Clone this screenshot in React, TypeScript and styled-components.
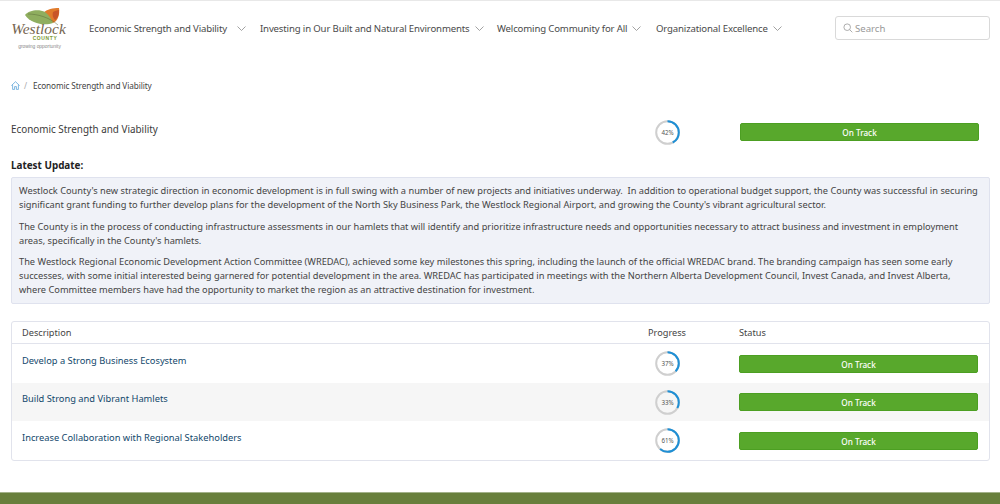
import React from "react";
import styled, { createGlobalStyle } from "styled-components";

const Global = createGlobalStyle`
  html, body { margin: 0; padding: 0; background: #fff; }
  body { font-family: "Noto Sans", "Open Sans", sans-serif; color: #333; overflow: hidden; }
`;
const Page = styled.div`
  width: 1000px; height: 504px; display: flex; flex-direction: column; overflow: hidden;
  border-top: 1px solid #e8e8e8; box-sizing: border-box;
`;
const Header = styled.header`
  height: 55px; display: flex; align-items: center; padding: 0 10px 0 11px; flex: none;
`;
const Logo = styled.div`
  width: 55px; height: 42px; margin-right: 23px; flex: none;
  display: flex; flex-direction: column; align-items: center; margin-top: 2px;
`;
const LeafSvg = styled.svg` width: 36px; height: 18px; margin-left: 8px; flex: none; margin-top: -1px; `;
const LogoName = styled.span`
  font: italic 15.5px/13px "Liberation Serif", serif; color: #75654f; margin-top: -4px;
`;
const LogoCounty = styled.span`
  font: bold 5px/6px "Liberation Sans", sans-serif; color: #7c9a2d; letter-spacing: .6px; margin-left: 13px;
`;
const LogoTag = styled.span`
  font: 4.9px/6px "Liberation Sans", sans-serif; color: #888; margin-top: 3px; white-space: nowrap; margin-left: 2px;
`;
const Nav = styled.nav` display: flex; align-items: center; flex: 1; margin-top: -1px; `;
const NavItem = styled.div<{ $w: number; $gap: number }>`
  display: flex; align-items: center; width: ${p => p.$w}px; flex: none; font-size: 9.6px; letter-spacing: -.15px; color: #4a4a4a; white-space: nowrap;
  svg { margin-left: ${p => p.$gap}px; flex: none; }
`;
const SearchBox = styled.div`
  width: 155px; height: 24px; box-sizing: border-box; border: 1px solid #d9d9d9; border-radius: 3px;
  display: flex; align-items: center; padding-left: 7px; gap: 2px; font-size: 9.6px; color: #999; flex: none; margin-top: -1px;
`;
const Main = styled.main` flex: 1; display: flex; flex-direction: column; padding: 0 10px 0 11px; `;
const Crumbs = styled.div`
  display: flex; align-items: center; height: 16px; margin-top: 21px; font-size: 8.2px; letter-spacing: -.1px; color: #444;
`;
const Sep = styled.span` color: #aaa; margin: 0 6px 0 4px; `;
const Summary = styled.div`
  display: grid; grid-template-columns: 644px 85px 239px; align-items: center; height: 26px; margin-top: 26px; font-size: 9.9px;
`;
const SummaryName = styled.div` margin-top: -7px; color: #3a3a3a; `;
const LatestLabel = styled.div`
  font-size: 9.9px; font-weight: 700; color: #222; margin-top: 13px; line-height: 14px;
`;
const UpdateBox = styled.div`
  margin-top: 5px; background: #f0f2f8; border: 1px solid #dfe2ee; border-radius: 2px; padding: 6px 11px 6px 7px;
  font-size: 9.25px; line-height: 14px; color: #444; height: 127px; box-sizing: border-box;
  p { margin: 0 0 7.5px; }
  p:last-child { margin: 0; }
`;
const Table = styled.div`
  margin-top: 17px; border: 1px solid #e1e3ec; border-radius: 3px; height: 140px; box-sizing: border-box;
`;
const Row = styled.div<{ $h: number; $alt?: boolean; $head?: boolean }>`
  display: grid; grid-template-columns: 626px 91px 1fr; align-items: center; height: ${p => p.$h}px;
  background: ${p => (p.$alt ? "#f6f6f6" : "transparent")};
  padding: 0 11px 0 10px; font-size: 9.2px; color: #444;
  ${p => p.$head && "border-bottom: 1px solid #e1e3ec; box-sizing: border-box;"}
`;
const RowLink = styled.a` color: #12476b; font-size: 9.3px; margin-top: -7px; text-decoration: none; `;
const ProgressCell = styled.div` padding-left: 7px; `;
const RingWrap = styled.div<{ $size: number }>`
  position: relative; width: ${p => p.$size}px; height: ${p => p.$size}px;
`;
const RingText = styled.span`
  position: absolute; inset: 0; display: flex; align-items: center; justify-content: center; font-size: 6.2px; color: #555;
`;
const StatusBadge = styled.div`
  height: 18px; background: #58a82c; border: 1px solid #4c9f22; border-radius: 2px; box-sizing: border-box; padding-top: 1px;
  color: #fff; font-size: 8.2px; font-weight: 500; display: flex; align-items: center; justify-content: center;
`;
const Footer = styled.footer`
  height: 12px; flex: none; background: #687f3c; border-top: 1px solid #a3b28a; box-sizing: border-box;
`;

const Chevron = () => (
  <svg width="9" height="5" viewBox="0 0 9 5" fill="none" stroke="#8a8a8a" strokeWidth=".8"><path d="M.5.5 4.5 4.5 8.5.5" /></svg>
);

const Ring = ({ value, size = 25 }: { value: number; size?: number }) => {
  const r = size / 2 - 1.2;
  const c = 2 * Math.PI * r;
  return (
    <RingWrap $size={size}>
      <svg width={size} height={size}>
        <circle cx={size / 2} cy={size / 2} r={r} fill="none" stroke="#cfcfcf" strokeWidth="2" />
        <circle cx={size / 2} cy={size / 2} r={r} fill="none" stroke="#1e8fd5" strokeWidth="2"
          strokeDasharray={`${(c * value) / 100} ${c}`} transform={`rotate(-90 ${size / 2} ${size / 2})`} />
      </svg>
      <RingText>{value}%</RingText>
    </RingWrap>
  );
};

const items = [
  { t: "Develop a Strong Business Ecosystem", v: 37, h: 39 },
  { t: "Build Strong and Vibrant Hamlets", v: 33, h: 38, alt: true },
  { t: "Increase Collaboration with Regional Stakeholders", v: 61, h: 39 },
];

export default function App() {
  return (
    <Page>
      <Global />
      <Header>
        <Logo>
          <LeafSvg viewBox="0 0 36 18">
            <path d="M18 5C22 1 28 0 34 0 35 6 33 13 28 15 24 13 20 9 18 5Z" fill="#e07b2c" />
            <path d="M28 4C30 3 32 2 34 2 34 7 33 10 30 12 28 10 27 7 28 4Z" fill="#c8552a" />
            <path d="M0 7C4 2 14 1 20 4 24 7 27 12 28 15 20 18 6 16 0 7Z" fill="#8fae5f" />
            <path d="M3 6C12 6 24 9 33 17" fill="none" stroke="#5d6f3a" strokeWidth=".5" />
          </LeafSvg>
          <LogoName>Westlock</LogoName>
          <LogoCounty>COUNTY</LogoCounty>
          <LogoTag>growing opportunity</LogoTag>
        </Logo>
        <Nav>
          <NavItem $w={171} $gap={10}>Economic Strength and Viability<Chevron /></NavItem>
          <NavItem $w={237} $gap={5}>Investing in Our Built and Natural Environments<Chevron /></NavItem>
          <NavItem $w={159} $gap={5}>Welcoming Community for All<Chevron /></NavItem>
          <NavItem $w={179} $gap={5}>Organizational Excellence<Chevron /></NavItem>
        </Nav>
        <SearchBox>
          <svg width="10" height="10" viewBox="0 0 10 10" fill="none" stroke="#999" strokeWidth=".8"><circle cx="4.2" cy="4.2" r="3.3" /><path d="M6.7 6.7 9.3 9.3" /></svg>
          Search
        </SearchBox>
      </Header>
      <Main>
        <Crumbs>
          <svg width="9" height="9" viewBox="0 0 9 9" fill="none" stroke="#4a9bd4" strokeWidth=".7"><path d="M.4 4.6 4.5.7 8.6 4.6M1.6 3.8V8.4H3.6V5.6H5.4V8.4H7.4V3.8" /></svg>
          <Sep>/</Sep>Economic Strength and Viability
        </Crumbs>
        <Summary>
          <SummaryName>Economic Strength and Viability</SummaryName>
          <Ring value={42} />
          <StatusBadge>On Track</StatusBadge>
        </Summary>
        <LatestLabel>Latest Update:</LatestLabel>
        <UpdateBox>
          <p>Westlock County's new strategic direction in economic development is in full swing with a number of new projects and initiatives underway.&nbsp; In addition to operational budget support, the County was successful in securing significant grant funding to further develop plans for the development of the North Sky Business Park, the Westlock Regional Airport, and growing the County's vibrant agricultural sector.</p>
          <p>The County is in the process of conducting infrastructure assessments in our hamlets that will identify and prioritize infrastructure needs and opportunities necessary to attract business and investment in employment areas, specifically in the County's hamlets.</p>
          <p>The Westlock Regional Economic Development Action Committee (WREDAC), achieved some key milestones this spring, including the launch of the official WREDAC brand. The branding campaign has seen some early successes, with some initial interested being garnered for potential development in the area. WREDAC has participated in meetings with the Northern Alberta Development Council, Invest Canada, and Invest Alberta, where Committee members have had the opportunity to market the region as an attractive destination for investment.</p>
        </UpdateBox>
        <Table>
          <Row $h={22} $head><span>Description</span><span>Progress</span><span>Status</span></Row>
          {items.map(i => (
            <Row key={i.t} $h={i.h} $alt={i.alt}>
              <RowLink>{i.t}</RowLink>
              <ProgressCell><Ring value={i.v} /></ProgressCell>
              <StatusBadge>On Track</StatusBadge>
            </Row>
          ))}
        </Table>
      </Main>
      <Footer />
    </Page>
  );
}
